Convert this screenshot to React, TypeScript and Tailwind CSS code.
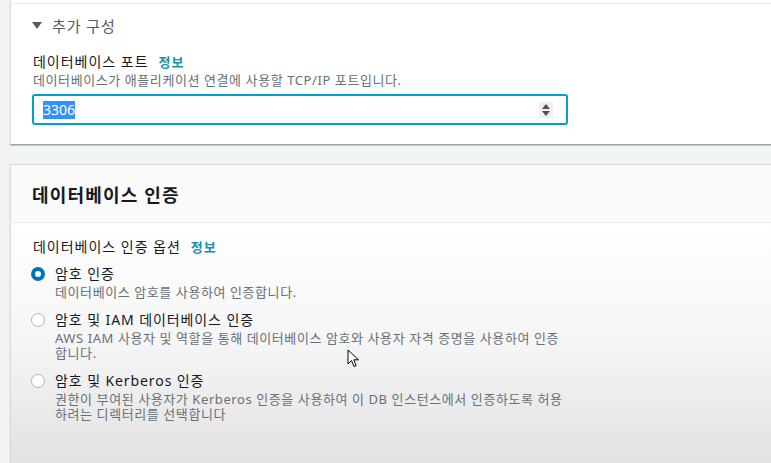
import { useState } from "react";

const font = {
  fontFamily: '"Noto Sans", "Noto Sans CJK KR", sans-serif',
};

type Option = {
  id: string;
  title: string;
  desc: string;
};

const options: Option[] = [
  {
    id: "password",
    title: "암호 인증",
    desc: "데이터베이스 암호를 사용하여 인증합니다.",
  },
  {
    id: "iam",
    title: "암호 및 IAM 데이터베이스 인증",
    desc: "AWS IAM 사용자 및 역할을 통해 데이터베이스 암호와 사용자 자격 증명을 사용하여 인증합니다.",
  },
  {
    id: "kerberos",
    title: "암호 및 Kerberos 인증",
    desc: "권한이 부여된 사용자가 Kerberos 인증을 사용하여 이 DB 인스턴스에서 인증하도록 허용하려는 디렉터리를 선택합니다",
  },
];

function Radio({ checked }: { checked: boolean }) {
  return checked ? (
    <span className="mt-[3px] flex h-[14px] w-[14px] shrink-0 items-center justify-center rounded-full bg-[#0073bb]">
      <span className="h-[6px] w-[6px] rounded-full bg-white" />
    </span>
  ) : (
    <span className="mt-[3px] h-[14px] w-[14px] shrink-0 rounded-full border border-[#aab7b8] bg-white" />
  );
}

export default function App() {
  const [selected, setSelected] = useState("password");

  return (
    <div
      className="relative h-[463px] w-[771px] overflow-hidden bg-[#f2f3f3] pl-[10px]"
      style={font}
    >
      {/* additional config card */}
      <div className="w-[780px] border-b border-l border-b-[#9aa5a6] border-l-[#d5dbdb] bg-white shadow-[0_1px_1px_rgba(0,0,0,0.15)]">
        <div className="h-[3px]" />
        <div className="border-t border-[#eaeded] pb-[19px] pl-[21px] pt-[12px]">
          <div className="flex items-center gap-[10px] text-[15px] leading-[20px] tracking-[0.06em] text-[#545b64]">
            <svg width="10" height="8" viewBox="0 0 10 8">
              <path d="M0 0 L10 0 L5 7 Z" fill="#545b64" />
            </svg>
            <span>추가 구성</span>
          </div>

          <div className="mt-4 flex items-center text-[14px] leading-[20px] tracking-[0.07em] text-[#16191f]">
            <span className="ml-[1px]">데이터베이스 포트</span>
            <span className="ml-[10px] text-[13px] font-bold text-[#1a8fa6]">정보</span>
          </div>
          <div className="ml-[1px] text-[13px] leading-[16px] tracking-[0.045em] text-[#687078]">
            데이터베이스가 애플리케이션 연결에 사용할 TCP/IP 포트입니다.
          </div>

          <div className="mt-[6px] flex h-[31px] w-[536px] items-center justify-between rounded-[3px] border-2 border-[#00a1c9] pl-[9px] pr-[13px]">
            <span className="bg-[#3390ff] text-[14px] leading-[18px] text-white">3306</span>
            <span className="flex h-[16px] w-[14px] flex-col items-center justify-center gap-[2px] bg-[#f0f0f0]">
              <svg width="8" height="5" viewBox="0 0 8 5">
                <path d="M4 0 L8 5 L0 5 Z" fill="#505050" />
              </svg>
              <svg width="8" height="5" viewBox="0 0 8 5">
                <path d="M0 0 L8 0 L4 5 Z" fill="#505050" />
              </svg>
            </span>
          </div>
        </div>
      </div>

      {/* database authentication card */}
      <div className="mt-[19px] h-[300px] w-[780px] border-l border-t border-[#d5dbdb] shadow-[0_1px_1px_rgba(0,0,0,0.2)]">
        <div className="flex h-[58px] items-center border-b border-[#eaeded] bg-[#fafafa] pl-[21px] pt-[2px]">
          <h2 className="text-[18px] font-bold leading-[24px] tracking-[0.065em] text-[#16191f]">
            데이터베이스 인증
          </h2>
        </div>
        <div className="h-[241px] bg-gradient-to-b from-white via-[#f5f5f5] to-[#e2e2e2] pl-[20px] pt-[14px]">
          <div className="flex items-center pl-[2px] text-[14px] leading-[20px] tracking-[0.07em] text-[#16191f]">
            <span>데이터베이스 인증 옵션</span>
            <span className="ml-[10px] text-[13px] font-bold text-[#1a8fa6]">정보</span>
          </div>

          <div className="mt-[7px] flex flex-col gap-[10px]">
            {options.map((o) => (
              <label
                key={o.id}
                className="flex cursor-pointer gap-[10px]"
                onClick={() => setSelected(o.id)}
              >
                <Radio checked={selected === o.id} />
                <div className="w-[512px]">
                  <div className="text-[14px] leading-[20px] tracking-[0.065em] text-[#16191f]">
                    {o.title}
                  </div>
                  <div className="mt-[1px] text-[13px] leading-[15px] tracking-[0.045em] text-[#687078]">
                    {o.desc}
                  </div>
                </div>
              </label>
            ))}
          </div>
        </div>
      </div>

      {/* mouse pointer */}
      <svg
        className="absolute left-[347px] top-[349px]"
        width="14"
        height="20"
        viewBox="0 0 14 20"
      >
        <path
          d="M1 1 L1 15 L4.5 11.5 L7 17.5 L9.2 16.6 L6.8 10.8 L11.5 10.8 Z"
          fill="white"
          stroke="black"
          strokeWidth="1"
          strokeLinejoin="round"
        />
      </svg>
    </div>
  );
}
